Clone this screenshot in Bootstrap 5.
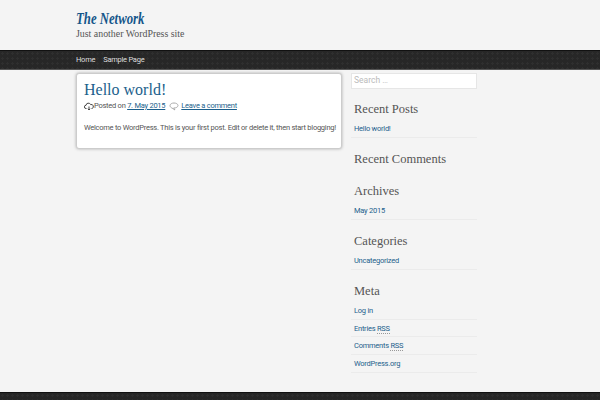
<!DOCTYPE html>
<html lang="en">
<head>
  <meta charset="UTF-8">
  <title>The Network</title>
  <link href="https://cdn.jsdelivr.net/npm/bootstrap@5.3.0/dist/css/bootstrap.min.css" rel="stylesheet">
  <style>
    html,body{height:400px;overflow:hidden}
    body{background:#f4f4f4;font-family:Roboto,sans-serif;font-size:7.5px;letter-spacing:-.25px;color:#555;display:flex;flex-direction:column}
    a{color:#1c5f8c}
    .site-wrap{padding-left:76px;width:480px}
    .site-top{height:50px;padding-top:10px}
    .site-title{font-family:"Liberation Serif",serif;font-weight:700;font-style:italic;font-size:17px;line-height:18px;letter-spacing:0;color:#14568a;margin:0;transform:scaleX(.75);transform-origin:left center}
    .site-desc{font-family:"Liberation Serif",serif;font-size:9.9px;line-height:12px;letter-spacing:0;margin:0;color:#555}
    .dark-bar{background-color:#272727;background-image:radial-gradient(#2f2f2f 1px,transparent 1.2px);background-size:5px 5px}
    .menu-bar{height:20px;border-top:1px solid #111;border-bottom:1px solid #555}
    .menu-bar a{color:#ddd;text-decoration:none;line-height:18px}
    .main-area{flex:1;padding-top:3px;gap:9px}
    .post-box{width:266px;height:76px;background:#fff;border:1px solid #ccc;border-radius:3px;box-shadow:0 0 3px #aaa;padding:6px 7px}
    .post-title{font-family:"Liberation Serif",serif;font-size:16px;line-height:20px;letter-spacing:0;color:#1c5f8c;margin:0;font-weight:400}
    .post-meta{line-height:12px;margin:0;color:#555}
    .post-meta svg{flex:none}
    .meta-comment{margin:0 2px 0 4px}
    .post-text{line-height:12px;margin:10px 0 0;white-space:nowrap}
    .side-col{width:126px}
    .search-box{height:16px;background:#fff;border:1px solid #e6e6e6;padding:0 2px;font-size:8.5px;letter-spacing:0;line-height:13px;color:#bbb;margin-bottom:12px}
    .side-title{font-family:"Liberation Serif",serif;font-size:12.5px;line-height:16px;letter-spacing:0;font-weight:400;color:#555;margin:0 0 0 3px}
    .side-list{list-style:none;margin:3px 0 13.3px;padding:0}
    .side-gap{height:16px}
    .side-list li{height:17.7px;line-height:18px;padding-left:3px;border-bottom:1px solid #ebebeb}
    .side-list a{text-decoration:none}
    abbr.rss{text-decoration:none;border-bottom:1px dotted #999}
    .foot-bar{height:8px;border-top:1px solid #111}
  </style>
</head>
<body>
  <!-- header -->
  <header class="site-wrap site-top">
    <p class="site-title">The Network</p>
    <p class="site-desc">Just another WordPress site</p>
  </header>
  <nav class="dark-bar menu-bar">
    <div class="site-wrap d-flex gap-2">
      <a href="#">Home</a>
      <a href="#">Sample Page</a>
    </div>
  </nav>

  <div class="site-wrap main-area d-flex align-items-start">
    <!-- post -->
    <main class="post-box">
      <h1 class="post-title">Hello world!</h1>
      <p class="post-meta d-flex align-items-center">
        <svg width="10" height="9" viewBox="0 0 10 9" fill="none" stroke="#444" stroke-width="1"><path d="M2.5 6.5H2A1.6 1.6 0 0 1 2 3.3 2.4 2.4 0 0 1 6.6 2.6 1.9 1.9 0 0 1 8 6.5H7.5"/><path d="M5 4.5V8M3.8 6.8 5 8 6.2 6.8"/></svg>
        <span>Posted on&nbsp;</span><a href="#">7. May 2015</a>
        <svg class="meta-comment" width="10" height="9" viewBox="0 0 10 9" fill="none" stroke="#aaa" stroke-width="1"><path d="M1 3.5C1 2 3 1 5 1S9 2 9 3.5 7 6 5 6H4.6L6 8 3 6C2 5.7 1 4.8 1 3.5Z"/></svg>
        <a href="#">Leave a comment</a>
      </p>
      <p class="post-text">Welcome to WordPress. This is your first post. Edit or delete it, then start blogging!</p>
    </main>

    <!-- sidebar -->
    <aside class="side-col">
      <div class="search-box">Search …</div>
      <h2 class="side-title">Recent Posts</h2>
      <ul class="side-list"><li><a href="#">Hello world!</a></li></ul>
      <h2 class="side-title">Recent Comments</h2>
      <div class="side-gap"></div>
      <h2 class="side-title">Archives</h2>
      <ul class="side-list"><li><a href="#">May 2015</a></li></ul>
      <h2 class="side-title">Categories</h2>
      <ul class="side-list"><li><a href="#">Uncategorized</a></li></ul>
      <h2 class="side-title">Meta</h2>
      <ul class="side-list">
        <li><a href="#">Log in</a></li>
        <li><a href="#">Entries <abbr class="rss">RSS</abbr></a></li>
        <li><a href="#">Comments <abbr class="rss">RSS</abbr></a></li>
        <li><a href="#">WordPress.org</a></li>
      </ul>
    </aside>
  </div>
  <footer class="dark-bar foot-bar"></footer>
  <script src="https://cdn.jsdelivr.net/npm/bootstrap@5.3.0/dist/js/bootstrap.bundle.min.js"></script>
</body>
</html>
